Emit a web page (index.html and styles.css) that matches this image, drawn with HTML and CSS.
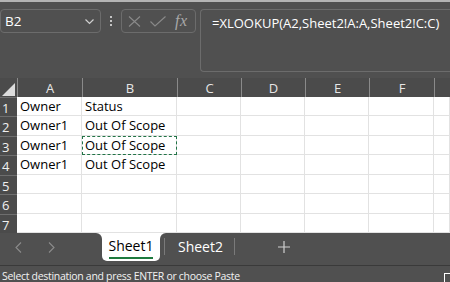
FILE: index.html
```html
<!DOCTYPE html>
<html lang="en">
<head>
  <meta charset="UTF-8">
  <title>Book1 - Excel</title>
  <link rel="stylesheet" href="styles.css">
</head>
<body>
  <div class="ribbon-edge"></div>

  <div class="formula-bar">
    <div class="name-box">
      <span>B2</span>
      <svg class="chev" width="9" height="6" viewBox="0 0 9 6"><polyline points="0.5,0.5 4.5,4.5 8.5,0.5" fill="none" stroke="#cfcfcf" stroke-width="1.2"/></svg>
    </div>
    <div class="dots"><i></i><i></i><i></i></div>
    <div class="fx-box">
      <svg width="13" height="11" viewBox="0 0 13 11"><path d="M1 0.5 L12 10.5 M12 0.5 L1 10.5" stroke="#8a8a8a" stroke-width="1.1" fill="none"/></svg>
      <svg width="16" height="11" viewBox="0 0 16 11"><polyline points="0.5,5.5 5,10 15.5,0.5" stroke="#8a8a8a" stroke-width="1.1" fill="none"/></svg>
      <span class="fx">fx</span>
    </div>
    <div class="formula">=XLOOKUP(A2,Sheet2!A:A,Sheet2!C:C)</div>
  </div>

  <div class="sheet">
    <div class="corner"><span class="tri"></span></div>
    <div class="col-head">A</div>
    <div class="col-head">B</div>
    <div class="col-head">C</div>
    <div class="col-head">D</div>
    <div class="col-head">E</div>
    <div class="col-head">F</div>
    <div class="col-head"></div>

    <div class="row-head">1</div>
    <div class="cell">Owner</div><div class="cell">Status</div><div class="cell"></div><div class="cell"></div><div class="cell"></div><div class="cell"></div><div class="cell"></div>
    <div class="row-head">2</div>
    <div class="cell">Owner1</div><div class="cell">Out Of Scope</div><div class="cell"></div><div class="cell"></div><div class="cell"></div><div class="cell"></div><div class="cell"></div>
    <div class="row-head">3</div>
    <div class="cell">Owner1</div><div class="cell copied">Out Of Scope</div><div class="cell"></div><div class="cell"></div><div class="cell"></div><div class="cell"></div><div class="cell"></div>
    <div class="row-head">4</div>
    <div class="cell">Owner1</div><div class="cell">Out Of Scope</div><div class="cell"></div><div class="cell"></div><div class="cell"></div><div class="cell"></div><div class="cell"></div>
    <div class="row-head">5</div>
    <div class="cell"></div><div class="cell"></div><div class="cell"></div><div class="cell"></div><div class="cell"></div><div class="cell"></div><div class="cell"></div>
    <div class="row-head">6</div>
    <div class="cell"></div><div class="cell"></div><div class="cell"></div><div class="cell"></div><div class="cell"></div><div class="cell"></div><div class="cell"></div>
    <div class="row-head">7</div>
    <div class="cell"></div><div class="cell"></div><div class="cell"></div><div class="cell"></div><div class="cell"></div><div class="cell"></div><div class="cell"></div>
  </div>

  <div class="tabs">
    <div class="nav">
      <svg width="7" height="11" viewBox="0 0 7 11"><polyline points="6,0.5 1,5.5 6,10.5" fill="none" stroke="#8c8c8c" stroke-width="1.1"/></svg>
      <svg width="7" height="11" viewBox="0 0 7 11"><polyline points="1,0.5 6,5.5 1,10.5" fill="none" stroke="#8c8c8c" stroke-width="1.1"/></svg>
    </div>
    <div class="tab active"><span>Sheet1</span></div>
    <div class="rest">
      <span class="sep"></span>
      <span class="tab">Sheet2</span>
      <span class="sep"></span>
      <svg class="plus" width="12" height="12" viewBox="0 0 12 12"><path d="M6 0 V12 M0 6 H12" stroke="#d0d0d0" stroke-width="1.2"/></svg>
    </div>
  </div>

  <div class="status">
    <span class="msg">Select destination and press ENTER or choose Paste</span>
    <span class="box"></span>
  </div>
</body>
</html>
```

FILE: styles.css
```css
body { margin:0; width:450px; height:282px; overflow:hidden; background:#505050; font-family:"Open Sans","Noto Sans",sans-serif; }

.ribbon-edge { height:2px; background:#b4b4b4; }

.formula-bar { display:flex; align-items:flex-start; height:76px; padding-top:7px; box-sizing:border-box; }
.name-box { width:101px; height:24px; box-sizing:border-box; border:1px solid #6c6c6c; border-radius:4px; display:flex; align-items:center; justify-content:space-between; padding:0 6px 0 4px; color:#fff; font-size:13.5px; }
.chev { margin-top:1px; }
.dots { width:20px; height:24px; display:flex; flex-direction:column; align-items:center; justify-content:center; gap:2px; }
.dots i { width:2px; height:2px; background:#c4c4c4; }
.fx-box { width:75px; height:24px; box-sizing:border-box; border:1px solid #6c6c6c; border-radius:4px; display:flex; align-items:center; padding-left:6px; gap:9px; }
.fx { font-family:"Liberation Serif",serif; font-style:italic; font-size:16px; color:#a8a8a8; letter-spacing:0.5px; }
.formula { flex:1; margin-left:4px; height:63px; box-sizing:border-box; border:1px solid #6c6c6c; border-right:none; border-radius:4px 0 0 4px; padding:4px 0 0 11px; color:#fff; font-size:13px; white-space:nowrap; overflow:hidden; }

.sheet { display:grid; grid-template-columns:17px 65px 95px 64px 64px 64px 65px 1fr; grid-template-rows:19px 19px 20px 19px 20px 19px 20px 19px; background:#fff; }
.corner { background:#4b4b4b; position:relative; }
.tri { position:absolute; left:2px; bottom:1px; width:13px; height:13px; background:#dcdcdc; clip-path:polygon(100% 0,100% 100%,0 100%); }
.col-head { background:#4b4b4b; color:#e6e6e6; font-size:13px; text-align:center; line-height:20px; border-left:1px solid #8a8a8a; }
.row-head { background:#4b4b4b; color:#f0f0f0; font-size:13px; line-height:20px; padding-left:2px; border-top:1px solid #6e6e6e; }
.cell { border-right:1px solid #e2e2e2; border-bottom:1px solid #e2e2e2; font-size:13px; line-height:19px; padding-left:3px; color:#000; white-space:nowrap; }
.copied { outline:1px dashed #217346; outline-offset:-1px; }

.tabs { display:flex; height:32px; background:linear-gradient(#fff 0 10px, #505050 10px); }
.nav { width:102px; background:#505050; border-top-right-radius:6px; display:flex; align-items:center; gap:26px; padding:0 0 3px 15px; box-sizing:border-box; }
.tab.active { width:58px; height:28px; background:#fff; border-radius:0 0 5px 5px; display:flex; justify-content:center; }
.tab.active span { color:#000; font-size:14px; line-height:26px; height:24px; border-bottom:2px solid #1e7a3e; }
.rest { flex:1; background:#505050; border-top-left-radius:6px; display:flex; align-items:center; padding:0 0 5px 4px; }
.sep { width:1px; height:17px; background:#7a7a7a; }
.rest .tab { color:#fff; font-size:14px; padding:0 11px 0 13px; }
.plus { margin-left:43px; }

.status { height:17px; border-top:1px solid #3a3a3a; display:flex; align-items:center; justify-content:space-between; padding-left:2px; color:#f2f2f2; }
.msg { font-size:10.5px; letter-spacing:-0.3px; padding-top:3px; }
.box { width:5px; height:8px; border:1px solid #fff; border-right:none; align-self:flex-end; }
```
